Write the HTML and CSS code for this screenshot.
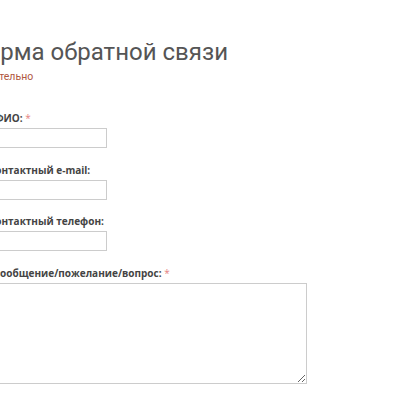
FILE: index.html
```html
<!DOCTYPE html>
<html lang="ru">
<head>
  <meta charset="UTF-8" />
  <meta name="viewport" content="width=device-width, initial-scale=1.0" />
  <title>Форма обратной связи</title>
  <link rel="stylesheet" href="styles.css">
</head>
<body>
  <div class="feedback">
    <h1>Форма обратной связи</h1>
    <p class="note">* - обязательно</p>
    <form class="feedback-form">
      <div class="field">
        <label for="fio">Ваше ФИО: <span class="req">*</span></label>
        <input type="text" id="fio" name="fio" />
      </div>
      <div class="field">
        <label for="email">Ваш контактный e-mail:</label>
        <input type="email" id="email" name="email" />
      </div>
      <div class="field">
        <label for="phone">Ваш контактный телефон:</label>
        <input type="text" id="phone" name="phone" />
      </div>
      <div class="field">
        <label for="message">Ваше сообщение/пожелание/вопрос: <span class="req">*</span></label>
        <textarea id="message" name="message"></textarea>
      </div>
    </form>
  </div>
</body>
</html>
```

FILE: styles.css
```css
* {
  margin: 0;
  padding: 0;
  box-sizing: border-box;
}

body {
  background-color: #ffffff;
  font-family: 'Open Sans', sans-serif;
  overflow: hidden;
}

.feedback {
  margin-left: -38px;
  padding-top: 38px;
}

h1 {
  font-family: Roboto, sans-serif;
  font-weight: 400;
  font-size: 24px;
  line-height: 28px;
  color: #555555;
  margin-left: 6px;
}

.note {
  font-family: Roboto, sans-serif;
  font-size: 10.5px;
  color: #b0573f;
  margin-top: 4px;
  margin-left: -4px;
}

.feedback-form {
  margin-top: 28px;
}

.field {
  margin-bottom: 14.5px;
}

.field label {
  display: block;
  font-size: 10px;
  line-height: 14px;
  font-weight: 700;
  color: #444444;
  margin-bottom: 3px;
  margin-left: 2px;
}

.req {
  color: #e57f7f;
  font-weight: 400;
}

.field input {
  display: block;
  width: 145px;
  height: 20px;
  border: 1px solid #cccccc;
  background-color: #ffffff;
}

.field textarea {
  display: block;
  width: 345px;
  height: 101px;
  border: 1px solid #cccccc;
  background-color: #ffffff;
}
```
